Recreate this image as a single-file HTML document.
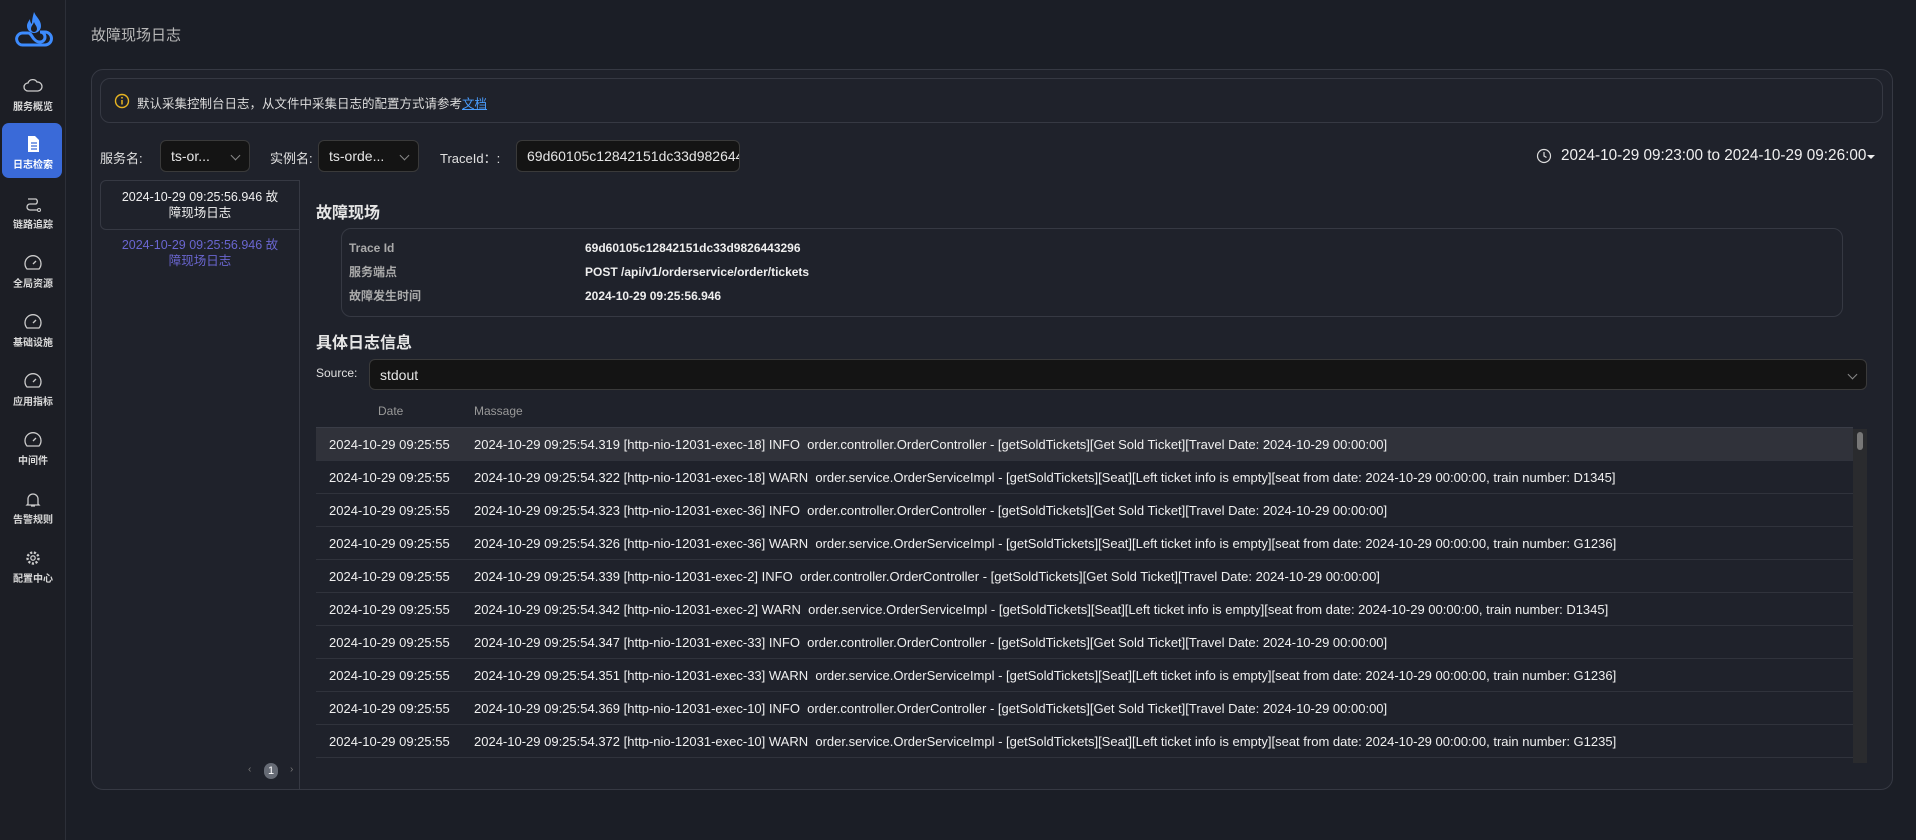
<!DOCTYPE html>
<html><head><meta charset="utf-8">
<style>
*{box-sizing:border-box;margin:0;padding:0}
body{width:1916px;height:840px;background:#1b1e26;font-family:"Liberation Sans","Noto Sans CJK SC",sans-serif;color:#e6e6e6;position:relative;overflow:hidden}
.abs{position:absolute}
.side{left:0;top:0;width:66px;height:840px;background:#1c1e25;border-right:1px solid #2c2f38}
.nav{position:absolute;left:0;width:66px;text-align:center;font-size:10px;color:#d8d8d8;font-weight:bold}
.nav svg{display:block;margin:0 auto}
.panel{left:91px;top:69px;width:1802px;height:721px;border:1px solid #363943;border-radius:12px;background:#1f222b}
.sel{background:#141414;border:1px solid #3a3a3a;border-radius:6px;height:32px;font-size:14px;color:#e6e6e6;line-height:30px;padding-left:10px}
.chev{position:absolute;right:10px;top:11px;width:7px;height:7px;border-right:1px solid #888;border-bottom:1px solid #888;transform:rotate(45deg)}
.lbl{font-size:13px;color:#e0e0e0}
.row{position:absolute;left:316px;width:1537px;height:33px;border-bottom:1px solid #30333c;font-size:13px;color:#f0f0f0;line-height:33px}
.row span.d{position:absolute;left:13px}
.row span.m{position:absolute;left:158px;white-space:nowrap}
</style></head><body>
<div class="abs side"></div>
<svg class="abs" style="left:14px;top:10px" width="40" height="38" viewBox="0 0 40 38">
<path d="M20 2c2 5 7 8 7 14a7 7 0 0 1-14 0c0-3 2-5 3-7 0 3 1 4 2 5 0-5 1-8 2-12z" fill="#3d8bfd"/>
<path d="M20 12c1 3 3 4 3 7a3 3 0 0 1-6 0c0-3 2-4 3-7z" fill="#1c1e25"/>
<path d="M3 31a6 6 0 0 1 6-8h5c3 0 4 4 6 6s3 3 6 3a5 5 0 0 0 0-10h5a6 6 0 0 1 0 13H9a6 6 0 0 1-6-4z" fill="none" stroke="#3d8bfd" stroke-width="3"/>
</svg>
<div class="abs" style="left:2px;top:123px;width:60px;height:55px;background:#3a6ad8;border-radius:7px"></div>
<div class="nav" style="top:77px"><svg width="20" height="18" viewBox="0 0 20 18"><path d="M5 14a4 4 0 0 1 0-8 5 5 0 0 1 9-1 4 4 0 0 1 1 9z" fill="none" stroke="#ccc" stroke-width="1.3"/></svg><div style="margin-top:3px">服务概览</div></div>
<div class="nav" style="top:134px;color:#fff"><svg width="20" height="20" viewBox="0 0 20 20"><path d="M5 2h7l4 4v12H5z" fill="#fff"/><path d="M8 9h6M8 12h6M8 15h6" stroke="#3a6ad8" stroke-width="1.3"/></svg><div style="margin-top:2px">日志检索</div></div>
<div class="nav" style="top:195px"><svg width="20" height="18" viewBox="0 0 20 18"><path d="M5 4h8a3 3 0 0 1 0 5H7a3 3 0 0 0 0 6h8" fill="none" stroke="#ccc" stroke-width="1.3"/><circle cx="16" cy="15" r="1.5" fill="none" stroke="#ccc"/></svg><div style="margin-top:3px">链路追踪</div></div>
<div class="nav" style="top:254px"><svg width="20" height="18" viewBox="0 0 20 18"><path d="M4 15a8 8 0 1 1 12 0z" fill="none" stroke="#ccc" stroke-width="1.3"/><path d="M10 10l3-3" stroke="#ccc" stroke-width="1.3"/></svg><div style="margin-top:3px">全局资源</div></div>
<div class="nav" style="top:313px"><svg width="20" height="18" viewBox="0 0 20 18"><path d="M4 15a8 8 0 1 1 12 0z" fill="none" stroke="#ccc" stroke-width="1.3"/><path d="M10 10l3-3" stroke="#ccc" stroke-width="1.3"/></svg><div style="margin-top:3px">基础设施</div></div>
<div class="nav" style="top:372px"><svg width="20" height="18" viewBox="0 0 20 18"><path d="M4 15a8 8 0 1 1 12 0z" fill="none" stroke="#ccc" stroke-width="1.3"/><path d="M10 10l3-3" stroke="#ccc" stroke-width="1.3"/></svg><div style="margin-top:3px">应用指标</div></div>
<div class="nav" style="top:431px"><svg width="20" height="18" viewBox="0 0 20 18"><path d="M4 15a8 8 0 1 1 12 0z" fill="none" stroke="#ccc" stroke-width="1.3"/><path d="M10 10l3-3" stroke="#ccc" stroke-width="1.3"/></svg><div style="margin-top:3px">中间件</div></div>
<div class="nav" style="top:490px"><svg width="20" height="18" viewBox="0 0 20 18"><path d="M5 14V9a5 5 0 0 1 10 0v5l1 1H4z M8 16h4" fill="none" stroke="#ccc" stroke-width="1.3"/></svg><div style="margin-top:3px">告警规则</div></div>
<div class="nav" style="top:549px"><svg width="20" height="18" viewBox="0 0 20 18"><circle cx="10" cy="9" r="5.5" fill="none" stroke="#ccc" stroke-width="2.4" stroke-dasharray="2.2 1.6"/><circle cx="10" cy="9" r="2.2" fill="none" stroke="#ccc" stroke-width="1.3"/></svg><div style="margin-top:3px">配置中心</div></div>

<div class="abs" style="left:91px;top:24px;font-size:15px;color:#b8b8b8">故障现场日志</div>
<div class="abs panel"></div>
<div class="abs" style="left:100px;top:78px;width:1783px;height:45px;border:1px solid #363943;border-radius:10px"></div>
<svg class="abs" style="left:114px;top:93px" width="16" height="16" viewBox="0 0 16 16"><circle cx="8" cy="8" r="6.5" fill="none" stroke="#e6b422" stroke-width="1.4"/><path d="M8 7v4.5" stroke="#e6b422" stroke-width="1.5"/><circle cx="8" cy="4.8" r="0.9" fill="#e6b422"/></svg>
<div class="abs" style="left:137px;top:93px;font-size:12.5px;color:#ddd">默认采集控制台日志，从文件中采集日志的配置方式请参考<span style="color:#4a9eff;text-decoration:underline">文档</span></div>

<div class="abs lbl" style="left:100px;top:148px">服务名:</div>
<div class="abs sel" style="left:160px;top:140px;width:90px">ts-or...<i class="chev"></i></div>
<div class="abs lbl" style="left:270px;top:148px">实例名:</div>
<div class="abs sel" style="left:318px;top:140px;width:101px">ts-orde...<i class="chev"></i></div>
<div class="abs lbl" style="left:440px;top:148px">TraceId：:</div>
<div class="abs sel" style="left:516px;top:140px;width:224px;overflow:hidden;white-space:nowrap">69d60105c12842151dc33d9826443296</div>
<svg class="abs" style="left:1536px;top:148px" width="16" height="16" viewBox="0 0 16 16"><circle cx="8" cy="8" r="6.5" fill="none" stroke="#ddd" stroke-width="1.2"/><path d="M8 4v4l2.5 1.5" fill="none" stroke="#ddd" stroke-width="1.2"/></svg>
<div class="abs" style="left:1561px;top:147px;font-size:15.3px;color:#f0f0f0">2024-10-29 09:23:00 to 2024-10-29 09:26:00</div>
<div class="abs" style="left:1867px;top:155px;width:0;height:0;border-left:4px solid transparent;border-right:4px solid transparent;border-top:4px solid #eee"></div>

<div class="abs" style="left:100px;top:180px;width:200px;height:50px;border:1px solid #363943;border-radius:6px 0 0 6px;text-align:center;font-size:12.5px;line-height:16px;padding-top:8px;color:#f0f0f0">2024-10-29 09:25:56.946 故<br>障现场日志</div>
<div class="abs" style="left:100px;top:237px;width:200px;text-align:center;font-size:12.5px;line-height:16px;color:#6a66d0">2024-10-29 09:25:56.946 故<br>障现场日志</div>
<div class="abs" style="left:299px;top:180px;width:1px;height:610px;background:#363943"></div>
<div class="abs" style="left:248px;top:764px;font-size:10px;color:#777">‹</div>
<div class="abs" style="left:264px;top:763px;width:14px;height:16px;border-radius:7px;background:#666b75;color:#fff;font-size:11px;text-align:center;line-height:16px">1</div>
<div class="abs" style="left:290px;top:764px;font-size:10px;color:#777">›</div>

<div class="abs" style="left:316px;top:199px;font-size:16px;font-weight:bold">故障现场</div>
<div class="abs" style="left:341px;top:228px;width:1502px;height:89px;border:1px solid #363943;border-radius:10px"></div>
<div class="abs" style="left:349px;top:236px;font-size:12px;color:#aaa;font-weight:bold;line-height:24px">Trace Id<br>服务端点<br>故障发生时间</div>
<div class="abs" style="left:585px;top:236px;font-size:12px;color:#eee;font-weight:bold;line-height:24px">69d60105c12842151dc33d9826443296<br>POST /api/v1/orderservice/order/tickets<br>2024-10-29 09:25:56.946</div>
<div class="abs" style="left:316px;top:329px;font-size:16px;font-weight:bold">具体日志信息</div>
<div class="abs" style="left:316px;top:366px;font-size:12px;color:#e0e0e0">Source:</div>
<div class="abs sel" style="left:369px;top:359px;width:1498px;height:31px">stdout<i class="chev"></i></div>
<div class="abs" style="left:378px;top:404px;font-size:12px;color:#999">Date</div>
<div class="abs" style="left:474px;top:404px;font-size:12px;color:#999">Massage</div>
<div class="abs" style="left:316px;top:427px;width:1537px;height:1px;background:#3a3d47"></div>
<div class="abs" style="left:1853px;top:429px;width:14px;height:334px;background:#2a2b2e"></div>
<div class="abs" style="left:1857px;top:432px;width:6px;height:18px;border-radius:3px;background:#777"></div>
<div class="row" style="top:428px;background:#30323a"><span class="d">2024-10-29 09:25:55</span><span class="m">2024-10-29 09:25:54.319 [http-nio-12031-exec-18] INFO&nbsp; order.controller.OrderController - [getSoldTickets][Get Sold Ticket][Travel Date: 2024-10-29 00:00:00]</span></div>
<div class="row" style="top:461px"><span class="d">2024-10-29 09:25:55</span><span class="m">2024-10-29 09:25:54.322 [http-nio-12031-exec-18] WARN&nbsp; order.service.OrderServiceImpl - [getSoldTickets][Seat][Left ticket info is empty][seat from date: 2024-10-29 00:00:00, train number: D1345]</span></div>
<div class="row" style="top:494px"><span class="d">2024-10-29 09:25:55</span><span class="m">2024-10-29 09:25:54.323 [http-nio-12031-exec-36] INFO&nbsp; order.controller.OrderController - [getSoldTickets][Get Sold Ticket][Travel Date: 2024-10-29 00:00:00]</span></div>
<div class="row" style="top:527px"><span class="d">2024-10-29 09:25:55</span><span class="m">2024-10-29 09:25:54.326 [http-nio-12031-exec-36] WARN&nbsp; order.service.OrderServiceImpl - [getSoldTickets][Seat][Left ticket info is empty][seat from date: 2024-10-29 00:00:00, train number: G1236]</span></div>
<div class="row" style="top:560px"><span class="d">2024-10-29 09:25:55</span><span class="m">2024-10-29 09:25:54.339 [http-nio-12031-exec-2] INFO&nbsp; order.controller.OrderController - [getSoldTickets][Get Sold Ticket][Travel Date: 2024-10-29 00:00:00]</span></div>
<div class="row" style="top:593px"><span class="d">2024-10-29 09:25:55</span><span class="m">2024-10-29 09:25:54.342 [http-nio-12031-exec-2] WARN&nbsp; order.service.OrderServiceImpl - [getSoldTickets][Seat][Left ticket info is empty][seat from date: 2024-10-29 00:00:00, train number: D1345]</span></div>
<div class="row" style="top:626px"><span class="d">2024-10-29 09:25:55</span><span class="m">2024-10-29 09:25:54.347 [http-nio-12031-exec-33] INFO&nbsp; order.controller.OrderController - [getSoldTickets][Get Sold Ticket][Travel Date: 2024-10-29 00:00:00]</span></div>
<div class="row" style="top:659px"><span class="d">2024-10-29 09:25:55</span><span class="m">2024-10-29 09:25:54.351 [http-nio-12031-exec-33] WARN&nbsp; order.service.OrderServiceImpl - [getSoldTickets][Seat][Left ticket info is empty][seat from date: 2024-10-29 00:00:00, train number: G1236]</span></div>
<div class="row" style="top:692px"><span class="d">2024-10-29 09:25:55</span><span class="m">2024-10-29 09:25:54.369 [http-nio-12031-exec-10] INFO&nbsp; order.controller.OrderController - [getSoldTickets][Get Sold Ticket][Travel Date: 2024-10-29 00:00:00]</span></div>
<div class="row" style="top:725px"><span class="d">2024-10-29 09:25:55</span><span class="m">2024-10-29 09:25:54.372 [http-nio-12031-exec-10] WARN&nbsp; order.service.OrderServiceImpl - [getSoldTickets][Seat][Left ticket info is empty][seat from date: 2024-10-29 00:00:00, train number: G1235]</span></div>
</body></html>
